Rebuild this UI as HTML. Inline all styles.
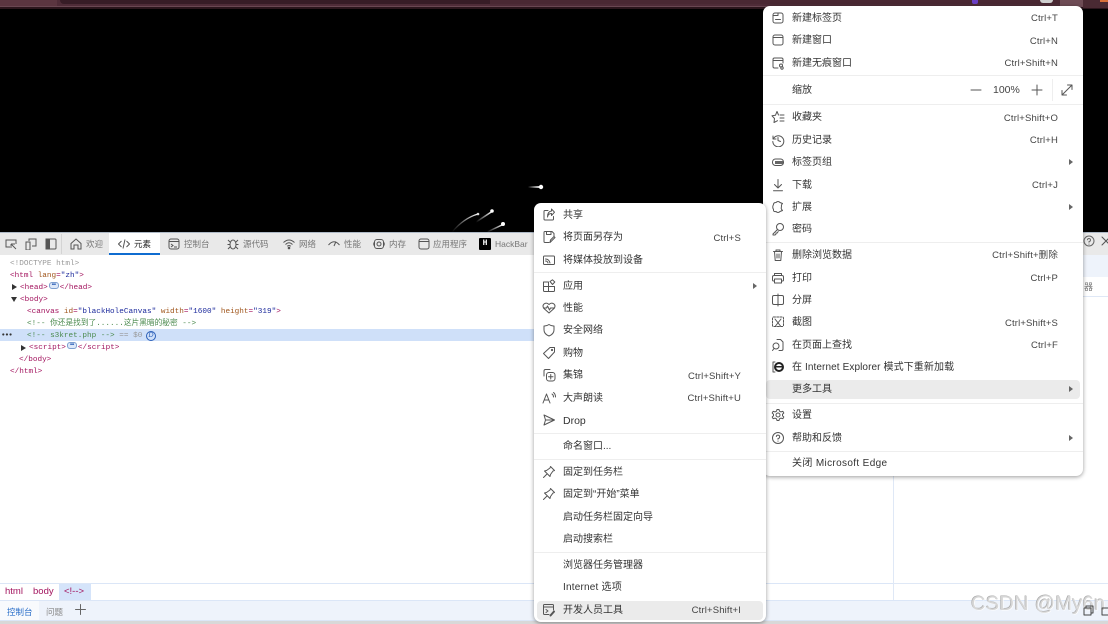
<!DOCTYPE html>
<html lang="zh"><head><meta charset="utf-8"><style>
html,body{margin:0;padding:0}
body{width:1108px;height:624px;overflow:hidden;position:relative;background:#fff;font-family:"Liberation Sans","Noto Sans CJK SC",sans-serif;color:#333}
div,span,svg{position:absolute}
span{white-space:nowrap}
#r{left:0;top:0;width:1108px;height:624px;overflow:hidden;filter:blur(.35px)}
.m{background:#fff;border-radius:7px;box-shadow:0 1px 4px rgba(0,0,0,.4)}
.i{font-size:10px;line-height:16px;height:16px;color:#333;margin-top:1px}
.k{font-size:9.5px;line-height:14px;height:14px;color:#444;text-align:right;width:120px;letter-spacing:.15px;margin-top:1px}
.s{height:1px;background:#eee}
.a{width:0;height:0;border-left:4px solid #666;border-top:3px solid transparent;border-bottom:3px solid transparent}
svg.c{width:14px;height:14px;fill:none;stroke:#555;stroke-width:1;stroke-linecap:round;stroke-linejoin:round}
.tb{font-size:8.5px;line-height:14px;top:237px;color:#777}
svg.d{width:12px;height:12px;top:238px;fill:none;stroke:#555;stroke-width:1}
.l{font:7.7px/12px "Liberation Mono","Noto Sans CJK SC",monospace;color:#a3155f;margin-top:1px}
.l b{font-weight:400;color:#a0561c}.l i{font-style:normal;color:#1c2a9c}.l u{text-decoration:none;color:#4b8a4e}.l em{font-style:normal;color:#999}
.e{display:inline-block;position:static;width:8px;height:5px;background:#dde8f8;border:1px solid #7d9fd0;border-radius:3px;vertical-align:0;margin:0 1px;box-sizing:content-box;font:700 5px/4px "Liberation Sans";color:#2b5fb8;text-align:center;letter-spacing:-.5px;overflow:hidden}
.tr{width:0;height:0}
</style></head><body><div id="r">
<div style="left:0;top:0;width:1108px;height:7px;background:#4f2c38"></div>
<div style="left:0;top:0;width:57px;height:7px;background:#5b3540"></div>
<div style="left:60px;top:0;width:430px;height:4px;background:#371c26;border-radius:0 0 0 4px"></div>
<div style="left:490px;top:0;width:573px;height:4px;background:#4a2833"></div>
<div style="left:0;top:6px;width:1108px;height:1px;background:#6a4752"></div>
<div style="left:0;top:7px;width:1108px;height:2px;background:#2b151c"></div>
<div style="left:972px;top:0;width:6px;height:4px;background:#6b3fc4;border-radius:0 0 2px 2px"></div>
<div style="left:1040px;top:0;width:13px;height:3px;background:#cfcfcf;border-radius:0 0 6px 6px"></div>
<div style="left:1060px;top:0;width:23px;height:7px;background:#6e4c55"></div>
<div style="left:1083px;top:0;width:25px;height:8px;background:#4a2a33"></div>
<div style="left:1100px;top:0;width:8px;height:2px;background:#d8703a"></div>
<div style="left:0;top:9px;width:1108px;height:223px;background:#000"></div>
<svg style="left:440px;top:175px;width:110px;height:60px" viewBox="440 175 110 60">
<defs><linearGradient id="g1" x1="0" x2="1" y1="0" y2="0"><stop offset="0" stop-color="#fff" stop-opacity="0"/><stop offset="1" stop-color="#fff"/></linearGradient></defs>
<rect x="528" y="186" width="13" height="2" fill="url(#g1)"/><circle cx="541" cy="187" r="2.2" fill="#fff"/>
<path d="M476 222L492 211.500" stroke="url(#g1)" stroke-width="1.500"/><circle cx="492" cy="211" r="1.800" fill="#fff"/>
<path d="M452 232Q464 218 478 214" stroke="url(#g1)" stroke-width="1.200" fill="none"/><circle cx="478" cy="214" r="1.300" fill="#ddd"/>
<path d="M487 232L503 224.500" stroke="url(#g1)" stroke-width="1.500"/><circle cx="503" cy="224" r="2" fill="#fff"/>
</svg>

<!-- devtools toolbar -->
<div style="left:0;top:232px;width:1108px;height:23px;background:#e9e9e9;border-top:1px solid #aeb9c6;box-sizing:border-box"></div>
<div style="left:109px;top:233px;width:51px;height:22px;background:#fff;border-bottom:2px solid #0f6cd0;box-sizing:border-box"></div>
<div style="left:61px;top:234px;width:1px;height:20px;background:#d4d4d4"></div>
<svg class="d" style="left:5px" viewBox="0 0 12 12"><path d="M5 9H1V2H11V6"/><path d="M6 6L11 11M6 6V10M6 6H10" stroke-width=".9"/></svg>
<svg class="d" style="left:25px" viewBox="0 0 12 12"><path d="M4 3V1H11V8H7"/><rect x="1" y="4" width="4" height="8"/></svg>
<svg class="d" style="left:45px" viewBox="0 0 12 12"><rect x="1" y="1" width="10" height="10" rx="1"/><rect x="1" y="1" width="3.500" height="10" fill="#555"/></svg>
<svg class="d" style="left:70px" viewBox="0 0 12 12"><path d="M1 5.500L6 1L11 5.500V11H8V7H4V11H1Z"/></svg>
<span class="tb" style="left:86px">欢迎</span>
<svg class="d" style="left:118px" viewBox="0 0 12 12"><path d="M3.500 3L.5 6L3.500 9M8.500 3L11.500 6L8.500 9M7 1.500L5 10.500"/></svg>
<span class="tb" style="left:134px;color:#222">元素</span>
<svg class="d" style="left:168px" viewBox="0 0 12 12"><rect x="1" y="1" width="10" height="10" rx="2"/><path d="M1 3.500H11M3 6L5 7.500L3 9M6 9H9"/></svg>
<span class="tb" style="left:184px">控制台</span>
<svg class="d" style="left:227px" viewBox="0 0 12 12"><ellipse cx="6" cy="6.500" rx="3" ry="4.500"/><path d="M3 4L1 2M9 4L11 2M3 6.500H.5M9 6.500H11.500M3 9L1 11M9 9L11 11"/></svg>
<span class="tb" style="left:243px">源代码</span>
<svg class="d" style="left:283px" viewBox="0 0 12 12"><path d="M.5 4.500Q6 -.5 11.500 4.500M2.500 6.500Q6 3 9.500 6.500M4.200 8.300Q6 6.800 7.800 8.300"/><circle cx="6" cy="10" r=".8" fill="#555"/></svg>
<span class="tb" style="left:299px">网络</span>
<svg class="d" style="left:328px" viewBox="0 0 12 12"><path d="M.5 7Q6 .5 11.500 7M6 8L8 3.500"/></svg>
<span class="tb" style="left:344px">性能</span>
<svg class="d" style="left:373px" viewBox="0 0 12 12"><rect x="1.500" y="1.500" width="9" height="9" rx="2.500"/><circle cx="6" cy="6" r="2"/><path d="M.2 4.500V7.500M11.800 4.500V7.500"/></svg>
<span class="tb" style="left:389px">内存</span>
<svg class="d" style="left:418px" viewBox="0 0 12 12"><rect x="1" y="1" width="10" height="10" rx="2"/><path d="M1 3.500H11"/></svg>
<span class="tb" style="left:433px">应用程序</span>
<div style="left:479px;top:238px;width:12px;height:12px;background:#000;border-radius:1px;color:#fff;font:700 8px/12px 'Liberation Mono',monospace;text-align:center">H</div>
<span class="tb" style="left:495px">HackBar</span>
<svg class="c" style="left:1083px;top:235px;width:12px;height:12px;stroke:#666" viewBox="0 0 12 12"><circle cx="6" cy="6" r="5"/><path d="M4.500 4.800A1.500 1.500 0 1 1 6 6.500V7.200M6 9V9.200"/></svg>
<svg class="c" style="left:1101px;top:236px;width:10px;height:10px;stroke:#555" viewBox="0 0 10 10"><path d="M1 1L9 9M9 1L1 9"/></svg>

<!-- dom tree -->
<div style="left:0;top:329px;width:534px;height:12px;background:#cfe0f9"></div>
<span class="l" style="left:10px;top:257px;color:#999">&lt;!DOCTYPE html&gt;</span>
<span class="l" style="left:10px;top:269px">&lt;html <b>lang</b>=<i>"zh"</i>&gt;</span>
<div class="tr" style="left:12px;top:284px;border-left:5px solid #333;border-top:3px solid transparent;border-bottom:3px solid transparent"></div>
<span class="l" style="left:20px;top:281px">&lt;head&gt;<span class="e">•••</span>&lt;/head&gt;</span>
<div class="tr" style="left:11px;top:297px;border-top:5px solid #333;border-left:3px solid transparent;border-right:3px solid transparent"></div>
<span class="l" style="left:20px;top:293px">&lt;body&gt;</span>
<span class="l" style="left:27px;top:305px">&lt;canvas <b>id</b>=<i>"blackHoleCanvas"</i> <b>width</b>=<i>"1600"</i> <b>height</b>=<i>"319"</i>&gt;</span>
<span class="l" style="left:27px;top:317px"><u>&lt;!-- 你还是找到了......这片黑暗的秘密 --&gt;</u></span>
<span class="l" style="left:1px;top:329px;color:#333;font-weight:700;letter-spacing:-1px">•••</span>
<span class="l" style="left:27px;top:329px"><u>&lt;!-- s3kret.php --&gt;</u> <em>== $0</em></span>
<div style="left:146px;top:331px;width:8px;height:8px;border:1px solid #2b5fb8;border-radius:50%;font:italic 7px/8px 'Liberation Sans';color:#2b5fb8;text-align:center">D</div>
<div class="tr" style="left:21px;top:345px;border-left:5px solid #333;border-top:3px solid transparent;border-bottom:3px solid transparent"></div>
<span class="l" style="left:29px;top:341px">&lt;script&gt;<span class="e">•••</span>&lt;/script&gt;</span>
<span class="l" style="left:19px;top:353px">&lt;/body&gt;</span>
<span class="l" style="left:10px;top:365px">&lt;/html&gt;</span>

<!-- right panel -->
<div style="left:893px;top:255px;width:1px;height:345px;background:#dfe8f6"></div>
<div style="left:893px;top:583px;width:215px;height:1px;background:#dfe8f6"></div>
<div style="left:1083px;top:255px;width:25px;height:22px;background:#eef3fb"></div>
<div style="left:1083px;top:296px;width:25px;height:1px;background:#dfe8f6"></div>
<span style="left:1084px;top:280px;font-size:9px;line-height:14px;color:#777">器</span>
<!-- breadcrumb -->
<div style="left:0;top:583px;width:893px;height:1px;background:#dbe6f7"></div>
<div style="left:59px;top:584px;width:32px;height:16px;background:#d5e4fa"></div>
<span style="left:5px;top:585px;font-size:9.500px;line-height:14px;color:#a3155f">html</span>
<span style="left:33px;top:585px;font-size:9.500px;line-height:14px;color:#a3155f">body</span>
<span style="left:64px;top:585px;font-size:9.500px;line-height:14px;color:#a3155f">&lt;!--&gt;</span>
<!-- drawer -->
<div style="left:0;top:600px;width:1108px;height:20px;background:#eef3fb;border-top:1px solid #dbe6f7;box-sizing:border-box"></div>
<div style="left:0;top:620px;width:1108px;height:1px;background:#dbe6f7"></div>
<div style="left:0;top:621px;width:1108px;height:3px;background:#d8d8d8"></div>
<div style="left:0;top:601px;width:39px;height:19px;background:#f8fafd"></div>
<span style="left:7px;top:605px;font-size:8.500px;line-height:14px;color:#2a6fc9">控制台</span>
<span style="left:46px;top:605px;font-size:8.500px;line-height:14px;color:#888">问题</span>
<svg class="c" style="left:75px;top:604px;width:11px;height:11px;stroke:#666" viewBox="0 0 11 11"><path d="M5.500 .5V10.500M.5 5.500H10.500"/></svg>

<!-- right menu -->
<div class="m" style="left:763px;top:6px;width:320px;height:470px"></div>
<div class="s" style="left:763px;top:75px;width:320px"></div>
<div class="s" style="left:763px;top:104px;width:320px"></div>
<div class="s" style="left:763px;top:242px;width:320px"></div>
<div class="s" style="left:763px;top:403px;width:320px"></div>
<div class="s" style="left:763px;top:451px;width:320px"></div>
<div style="left:1052px;top:79px;width:1px;height:22px;background:#eee"></div>
<div style="left:766px;top:380px;width:314px;height:19px;background:#ebebeb;border-radius:4px"></div>
<span class="i" style="left:792px;top:10px">新建标签页</span>
<span class="i" style="left:792px;top:32px">新建窗口</span>
<span class="i" style="left:792px;top:55px">新建无痕窗口</span>
<span class="i" style="left:792px;top:82px">缩放</span>
<span class="i" style="left:792px;top:109px">收藏夹</span>
<span class="i" style="left:792px;top:132px">历史记录</span>
<span class="i" style="left:792px;top:154px">标签页组</span>
<span class="i" style="left:792px;top:177px">下载</span>
<span class="i" style="left:792px;top:199px">扩展</span>
<span class="i" style="left:792px;top:221px">密码</span>
<span class="i" style="left:792px;top:247px">删除浏览数据</span>
<span class="i" style="left:792px;top:270px">打印</span>
<span class="i" style="left:792px;top:292px">分屏</span>
<span class="i" style="left:792px;top:314px">截图</span>
<span class="i" style="left:792px;top:337px">在页面上查找</span>
<span class="i" style="left:792px;top:359px;letter-spacing:.1px">在 Internet Explorer 模式下重新加载</span>
<span class="i" style="left:792px;top:381px">更多工具</span>
<span class="i" style="left:792px;top:407px">设置</span>
<span class="i" style="left:792px;top:430px">帮助和反馈</span>
<span class="i" style="left:792px;top:455px;letter-spacing:.35px">关闭 Microsoft Edge</span>
<span class="k" style="left:938px;top:11px">Ctrl+T</span>
<span class="k" style="left:938px;top:34px">Ctrl+N</span>
<span class="k" style="left:938px;top:56px">Ctrl+Shift+N</span>
<span class="k" style="left:938px;top:111px">Ctrl+Shift+O</span>
<span class="k" style="left:938px;top:133px">Ctrl+H</span>
<span class="k" style="left:938px;top:178px">Ctrl+J</span>
<span class="k" style="left:938px;top:248px">Ctrl+Shift+删除</span>
<span class="k" style="left:938px;top:271px">Ctrl+P</span>
<span class="k" style="left:938px;top:316px">Ctrl+Shift+S</span>
<span class="k" style="left:938px;top:338px">Ctrl+F</span>
<span style="left:993px;top:83px;font-size:10.500px;line-height:14px;color:#444">100%</span>
<svg class="c" style="left:969px;top:83px" viewBox="0 0 14 14"><path d="M2 7H12"/></svg>
<svg class="c" style="left:1030px;top:83px" viewBox="0 0 14 14"><path d="M2 7H12M7 2V12"/></svg>
<svg class="c" style="left:1060px;top:83px" viewBox="0 0 14 14"><path d="M2 12L12 2M7.500 2H12V6.500M2 7.500V12H6.500"/></svg>
<div class="a" style="left:1069px;top:159px"></div>
<div class="a" style="left:1069px;top:204px"></div>
<div class="a" style="left:1069px;top:386px"></div>
<div class="a" style="left:1069px;top:435px"></div>
<svg class="c" style="left:771px;top:11px" viewBox="0 0 14 14"><rect x="2" y="2" width="10" height="10" rx="2"/><path d="M2 4.500H7V2M4.500 8.500H9.500" /></svg>
<svg class="c" style="left:771px;top:33px" viewBox="0 0 14 14"><rect x="2" y="2" width="10" height="10" rx="2"/><path d="M2 4.500H12"/></svg>
<svg class="c" style="left:771px;top:56px" viewBox="0 0 14 14"><path d="M7 12H3.500Q2 12 2 10.500V3.500Q2 2 3.500 2H10.500Q12 2 12 3.500V7M2 4.500H12"/><circle cx="10" cy="9.500" r="1.500"/><circle cx="11" cy="12" r="1.200"/></svg>
<svg class="c" style="left:771px;top:110px" viewBox="0 0 14 14"><path d="M6 1.500L7.500 5H7.500M6 1.500L4.500 5.200L1 5.800L3.500 8.500L3 12.500L6.500 10.700M9 5H13M9 8H13M9 11H13"/></svg>
<svg class="c" style="left:771px;top:133px" viewBox="0 0 14 14"><path d="M2 3V6H5M2.300 6A5.500 5.500 0 1 1 1.800 8.500M7 4.500V7.500L9.500 8.500"/></svg>
<svg class="c" style="left:771px;top:155px" viewBox="0 0 14 14"><rect x="1.500" y="4" width="11" height="6.500" rx="3"/><rect x="4" y="6" width="8" height="3" fill="#666" stroke="none"/></svg>
<svg class="c" style="left:771px;top:178px" viewBox="0 0 14 14"><path d="M7 1.500V10M3.500 6.500L7 10L10.500 6.500M2.500 12.800H11.500"/></svg>
<svg class="c" style="left:771px;top:200px" viewBox="0 0 14 14"><path d="M5 2.500Q7 .5 9 2.500L11.500 3.500Q10 5 10.500 7Q9.500 8.500 11.500 10.500L9 11.500Q7 13.500 5 11.500Q2 12 2.500 9.500Q1 7 2.500 4.500Q2.500 2.500 5 2.500Z"/></svg>
<svg class="c" style="left:771px;top:222px" viewBox="0 0 14 14"><circle cx="9" cy="5" r="3.500"/><path d="M6.500 7.500L2 12V13H4L5 12V11H6.200L7.200 9.500"/></svg>
<svg class="c" style="left:771px;top:248px" viewBox="0 0 14 14"><path d="M2.500 3.500H11.500M5 3.500V2H9V3.500M3.500 3.500L4.200 12.500H9.800L10.500 3.500M6 6V10M8 6V10"/></svg>
<svg class="c" style="left:771px;top:271px" viewBox="0 0 14 14"><path d="M3.500 10H2.500Q1.500 10 1.500 9V6Q1.500 4.500 3 4.500H11Q12.500 4.500 12.500 6V9Q12.500 10 11.500 10H10.500M3.500 4.500V2.500H10.500V4.500"/><rect x="3.500" y="8" width="7" height="4"/></svg>
<svg class="c" style="left:771px;top:293px" viewBox="0 0 14 14"><rect x="1.500" y="2.500" width="11" height="9" rx="1.500"/><path d="M7 1V13"/></svg>
<svg class="c" style="left:771px;top:315px" viewBox="0 0 14 14"><rect x="1.500" y="2" width="11" height="9.500" rx="1" stroke-dasharray="2 1.200"/><path d="M4 4L9.500 11M10 4L4.500 11"/></svg>
<svg class="c" style="left:771px;top:338px" viewBox="0 0 14 14"><path d="M6 1.500H9.500L12 4V11Q12 12.500 10.500 12.500H8"/><circle cx="5" cy="8" r="3"/><path d="M3 10.500L1.500 12.500"/></svg>
<svg class="c" style="left:771px;top:360px" viewBox="0 0 14 14"><path d="M4 2H2V12H4"/><circle cx="8" cy="7" r="4" stroke-width="2" stroke="#222"/><path d="M5 6.800H11" stroke="#222" stroke-width="1.500"/></svg>
<svg class="c" style="left:771px;top:408px" viewBox="0 0 14 14"><circle cx="7" cy="7" r="2"/><path d="M6 1.500H8L8.500 3.200L10 3.900L11.800 3.300L12.800 5L11.500 6.200V7.800L12.800 9L11.800 10.700L10 10.100L8.500 10.800L8 12.500H6L5.500 10.800L4 10.100L2.200 10.700L1.200 9L2.500 7.800V6.200L1.200 5L2.200 3.300L4 3.900L5.500 3.200Z"/></svg>
<svg class="c" style="left:771px;top:431px" viewBox="0 0 14 14"><circle cx="7" cy="7" r="5.500"/><path d="M5.300 5.500A1.700 1.700 0 1 1 7 7.500V8.300M7 10V10.200"/></svg>

<!-- left menu (sits above the right menu) -->
<div class="m" style="left:534px;top:203px;width:232px;height:419px"></div>
<div class="s" style="left:534px;top:272px;width:232px"></div>
<div class="s" style="left:534px;top:433px;width:232px"></div>
<div class="s" style="left:534px;top:459px;width:232px"></div>
<div class="s" style="left:534px;top:552px;width:232px"></div>
<div style="left:537px;top:601px;width:226px;height:19px;background:#ebebeb;border-radius:4px"></div>
<span class="i" style="left:563px;top:207px">共享</span>
<span class="i" style="left:563px;top:229px">将页面另存为</span>
<span class="i" style="left:563px;top:252px">将媒体投放到设备</span>
<span class="i" style="left:563px;top:278px">应用</span>
<span class="i" style="left:563px;top:300px">性能</span>
<span class="i" style="left:563px;top:322px">安全网络</span>
<span class="i" style="left:563px;top:345px">购物</span>
<span class="i" style="left:563px;top:367px">集锦</span>
<span class="i" style="left:563px;top:390px">大声朗读</span>
<span class="i" style="left:563px;top:412px;font-size:10.500px">Drop</span>
<span class="i" style="left:563px;top:438px">命名窗口...</span>
<span class="i" style="left:563px;top:464px">固定到任务栏</span>
<span class="i" style="left:563px;top:486px">固定到“开始”菜单</span>
<span class="i" style="left:563px;top:509px">启动任务栏固定向导</span>
<span class="i" style="left:563px;top:531px">启动搜索栏</span>
<span class="i" style="left:563px;top:557px">浏览器任务管理器</span>
<span class="i" style="left:563px;top:579px;letter-spacing:.2px">Internet 选项</span>
<span class="i" style="left:563px;top:602px">开发人员工具</span>
<span class="k" style="left:621px;top:231px">Ctrl+S</span>
<span class="k" style="left:621px;top:369px">Ctrl+Shift+Y</span>
<span class="k" style="left:621px;top:391px">Ctrl+Shift+U</span>
<span class="k" style="left:621px;top:603px">Ctrl+Shift+I</span>
<div class="a" style="left:753px;top:283px"></div>
<svg class="c" style="left:542px;top:208px" viewBox="0 0 14 14"><path d="M6 2.500H3Q2 2.500 2 3.500V11Q2 12 3 12H10.500Q11.500 12 11.500 11V8.500"/><path d="M5.500 9Q6 5.500 9.500 5.500V7.500L12.500 4.200L9.500 1V3Q5.500 3.500 5.500 9Z"/></svg>
<svg class="c" style="left:542px;top:230px" viewBox="0 0 14 14"><path d="M7 12.500H3Q2 12.500 2 11.500V2.500Q2 1.500 3 1.500H10L12 3.500V6"/><path d="M4.500 1.500V4.500H9V1.500M8 12.500L8.500 10L12 6.500L13 7.500L9.500 11Z"/></svg>
<svg class="c" style="left:542px;top:253px" viewBox="0 0 14 14"><rect x="1.500" y="3" width="11" height="8.500" rx="1"/><path d="M3.500 8Q5.500 8 6 10M3.500 6Q7 6 8 10"/></svg>
<svg class="c" style="left:542px;top:279px" viewBox="0 0 14 14"><path d="M1.500 3H6.500V12.500H2.500Q1.500 12.500 1.500 11.500ZM1.500 7.500H12.500V11.500Q12.500 12.500 11.500 12.500H6.500M8 2.500L10.500 .8L12.800 3L10.500 5.500Z"/></svg>
<svg class="c" style="left:542px;top:301px" viewBox="0 0 14 14"><path d="M7 12L2 7.500Q0 5 2 3Q4.500 1 7 3.500Q9.500 1 12 3Q14 5 12 7.500Z"/><path d="M1.500 7H4.500L5.500 5L7.500 9L8.500 7H12.500"/></svg>
<svg class="c" style="left:542px;top:323px" viewBox="0 0 14 14"><path d="M7 1.500Q9.500 3.200 12 3V7Q12 11 7 13Q2 11 2 7V3Q4.500 3.200 7 1.500Z"/></svg>
<svg class="c" style="left:542px;top:346px" viewBox="0 0 14 14"><path d="M8 1.500H12.500V6L6.500 12.500L1.500 7.500Z"/><circle cx="10" cy="4" r=".6"/></svg>
<svg class="c" style="left:542px;top:368px" viewBox="0 0 14 14"><path d="M8 1.500H3.500Q2 1.500 2 3V8"/><rect x="4.500" y="4.500" width="8.500" height="8.500" rx="2.500"/><path d="M8.750 6.500V11M6.500 8.750H11"/></svg>
<svg class="c" style="left:542px;top:391px" viewBox="0 0 14 14"><path d="M1 12L4.500 3L8 12M2.300 9H6.700M10 3Q11.500 4 11.500 6M11.500 1.500Q13.500 3 13.500 6"/></svg>
<svg class="c" style="left:542px;top:413px" viewBox="0 0 14 14"><path d="M2 2L12.500 7L2 12L3.500 7ZM3.500 7H12"/></svg>
<svg class="c" style="left:542px;top:465px" viewBox="0 0 14 14"><path d="M8.500 1.500L12.500 5.500L11 6L8.500 9.500L8 11.500L2.500 6L4.500 5.500L8 3ZM5 9L1.500 12.500"/></svg>
<svg class="c" style="left:542px;top:487px" viewBox="0 0 14 14"><path d="M8.500 1.500L12.500 5.500L11 6L8.500 9.500L8 11.500L2.500 6L4.500 5.500L8 3ZM5 9L1.500 12.500"/></svg>
<svg class="c" style="left:542px;top:603px" viewBox="0 0 14 14"><path d="M11.500 7V2.500Q11.500 1.500 10.500 1.500H2.500Q1.500 1.500 1.500 2.500V10.500Q1.500 11.500 2.500 11.500H7M1.500 4H11.500M4 6.500L6 8L4 9.500"/><path d="M8.500 12.500L12 8.500" stroke-width="2"/></svg>

<span style="left:971px;top:591px;font-size:20px;line-height:26px;color:#d6d6d6;text-shadow:.6px .6px 0 #fff,-.6px -.4px 0 #aaa;letter-spacing:.3px">CSDN @My6n</span>
<svg class="c" style="left:1083px;top:605px;width:11px;height:11px;stroke:#444" viewBox="0 0 11 11"><rect x="1" y="3" width="7" height="7"/><path d="M3 3V1H10V8H8"/></svg>
<svg class="c" style="left:1101px;top:605px;width:11px;height:11px;stroke:#444" viewBox="0 0 11 11"><rect x="1" y="3" width="7" height="7"/></svg>
</div></body></html>
